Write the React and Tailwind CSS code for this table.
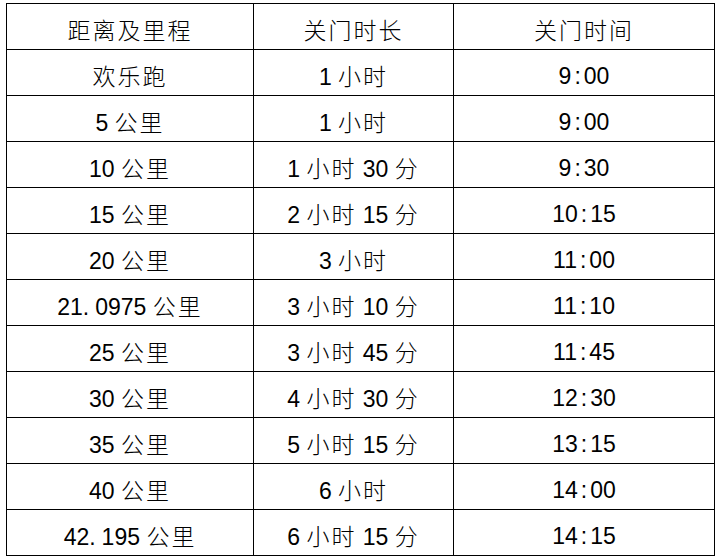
import React from 'react';

const rows = [
  ['欢乐跑', '1 小时', '9:00'],
  ['5 公里', '1 小时', '9:00'],
  ['10 公里', '1 小时 30 分', '9:30'],
  ['15 公里', '2 小时 15 分', '10:15'],
  ['20 公里', '3 小时', '11:00'],
  ['21.0975 公里', '3 小时 10 分', '11:10'],
  ['25 公里', '3 小时 45 分', '11:45'],
  ['30 公里', '4 小时 30 分', '12:30'],
  ['35 公里', '5 小时 15 分', '13:15'],
  ['40 公里', '6 小时', '14:00'],
  ['42.195 公里', '6 小时 15 分', '14:15'],
];

// CJK runs get their own size/spacing, digits stay in the latin face
function Mixed({ text }) {
  const parts = text.split(/([\u4e00-\u9fff]+|[:.])/).filter(Boolean);
  return (
    <>
      {parts.map((p, i) => {
        if (/[\u4e00-\u9fff]/.test(p)) {
          return (
            <span key={i} className="text-[23px] tracking-[2px] font-light font-['Noto_Sans_CJK_SC',sans-serif]">
              {p}
            </span>
          );
        }
        if (p === ':') return <span key={i} className="mx-[3px]">:</span>;
        if (p === '.') return <span key={i} className="mr-[6px]">.</span>;
        return <span key={i}>{p}</span>;
      })}
    </>
  );
}

function Cell({ children, head }) {
  const Tag = head ? 'th' : 'td';
  return (
    <Tag className="border border-black h-[46px] p-0 pt-[7px] text-center align-middle font-normal whitespace-nowrap">
      {children}
    </Tag>
  );
}

export default function App() {
  return (
    <div className="w-[720px] h-[560px] bg-white pl-[6px] pt-[3px] font-['Liberation_Sans','Noto_Sans_CJK_SC',sans-serif] text-[23px] text-black">
      <table className="table-fixed border-collapse w-[708px]">
        <colgroup>
          <col className="w-[247px]" />
          <col className="w-[200px]" />
          <col className="w-[261px]" />
        </colgroup>
        <thead>
          <tr>
            <Cell head><Mixed text="距离及里程" /></Cell>
            <Cell head><Mixed text="关门时长" /></Cell>
            <Cell head><Mixed text="关门时间" /></Cell>
          </tr>
        </thead>
        <tbody>
          {rows.map((r, i) => (
            <tr key={i}>
              {r.map((c, j) => (
                <Cell key={j}><Mixed text={c} /></Cell>
              ))}
            </tr>
          ))}
        </tbody>
      </table>
    </div>
  );
}
